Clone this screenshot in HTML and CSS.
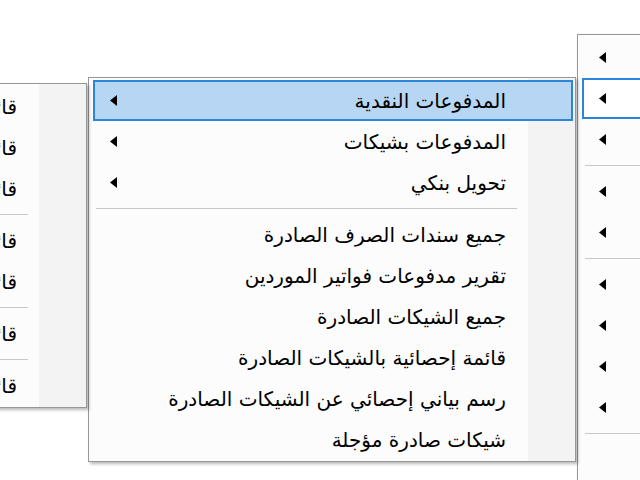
FILE: index.html
```html
<!DOCTYPE html>
<html lang="ar">
<head>
<meta charset="utf-8">
<title>قائمة المدفوعات</title>
<link rel="stylesheet" href="styles.css">
</head>
<body>
  <div class="menu menu-right">
    <div class="item"><span class="label">المقبوضات</span><svg class="arrow" viewBox="0 0 7 11"><path d="M7 0L0 5.5L7 11Z"/></svg></div>
    <div class="item focus"><span class="label">المدفوعات</span><svg class="arrow" viewBox="0 0 7 11"><path d="M7 0L0 5.5L7 11Z"/></svg></div>
    <div class="item"><span class="label">القيود اليومية</span><svg class="arrow" viewBox="0 0 7 11"><path d="M7 0L0 5.5L7 11Z"/></svg></div>
    <div class="sep"></div>
    <div class="item"><span class="label">العملاء</span><svg class="arrow" viewBox="0 0 7 11"><path d="M7 0L0 5.5L7 11Z"/></svg></div>
    <div class="item"><span class="label">الموردين</span><svg class="arrow" viewBox="0 0 7 11"><path d="M7 0L0 5.5L7 11Z"/></svg></div>
    <div class="sep"></div>
    <div class="item"><span class="label">الحسابات</span><svg class="arrow" viewBox="0 0 7 11"><path d="M7 0L0 5.5L7 11Z"/></svg></div>
    <div class="item"><span class="label">مراكز التكلفة</span><svg class="arrow" viewBox="0 0 7 11"><path d="M7 0L0 5.5L7 11Z"/></svg></div>
    <div class="item"><span class="label">الصناديق</span><svg class="arrow" viewBox="0 0 7 11"><path d="M7 0L0 5.5L7 11Z"/></svg></div>
    <div class="item"><span class="label">البنوك</span><svg class="arrow" viewBox="0 0 7 11"><path d="M7 0L0 5.5L7 11Z"/></svg></div>
    <div class="sep"></div>
    <div class="item"><span class="label">ميزان المراجعة</span></div>
    <div class="item"><span class="label">قائمة الدخل</span></div>
  </div>

  <div class="menu menu-mid">
    <div class="item hl"><span class="label">المدفوعات النقدية</span><svg class="arrow" viewBox="0 0 7 11"><path d="M7 0L0 5.5L7 11Z"/></svg></div>
    <div class="item"><span class="label">المدفوعات بشيكات</span><svg class="arrow" viewBox="0 0 7 11"><path d="M7 0L0 5.5L7 11Z"/></svg></div>
    <div class="item"><span class="label">تحويل بنكي</span><svg class="arrow" viewBox="0 0 7 11"><path d="M7 0L0 5.5L7 11Z"/></svg></div>
    <div class="sep"></div>
    <div class="item"><span class="label">جميع سندات الصرف الصادرة</span></div>
    <div class="item"><span class="label">تقرير مدفوعات فواتير الموردين</span></div>
    <div class="item"><span class="label">جميع الشيكات الصادرة</span></div>
    <div class="item"><span class="label">قائمة إحصائية بالشيكات الصادرة</span></div>
    <div class="item"><span class="label">رسم بياني إحصائي عن الشيكات الصادرة</span></div>
    <div class="item"><span class="label">شيكات صادرة مؤجلة</span></div>
  </div>

  <div class="menu menu-left">
    <div class="item"><span class="label">قائمة سندات الصرف النقدية</span></div>
    <div class="item"><span class="label">قائمة المدفوعات النقدية</span></div>
    <div class="item"><span class="label">قائمة المدفوعات حسب الصندوق</span></div>
    <div class="sep"></div>
    <div class="item"><span class="label">قائمة المدفوعات حسب الحساب</span></div>
    <div class="item"><span class="label">قائمة المدفوعات حسب المورد</span></div>
    <div class="sep"></div>
    <div class="item"><span class="label">قائمة المدفوعات اليومية</span></div>
    <div class="sep"></div>
    <div class="item"><span class="label">قائمة المدفوعات الملغاة</span></div>
  </div>
</body>
</html>
```

FILE: styles.css
```css
html, body {
  margin: 0;
  padding: 0;
  width: 640px;
  height: 480px;
  overflow: hidden;
  background: #ffffff;
}

.menu {
  position: absolute;
  box-sizing: border-box;
  border: 1px solid #979797;
  padding: 2px 2px 1px 4px;
  direction: rtl;
  font-family: "DejaVu Sans", sans-serif;
  font-size: 20px;
  color: #000;
  background: linear-gradient(to left, #f3f3f3 0, #f3f3f3 47px, #fcfcfc 47px);
  box-shadow: 2px 2px 3px rgba(0, 0, 0, 0.28);
}

.menu-right {
  left: 577px;
  top: 34px;
  width: 360px;
  z-index: 1;
}

.menu-mid {
  left: 88px;
  top: 77px;
  width: 488px;
  z-index: 2;
}

.menu-left {
  left: -300px;
  top: 83px;
  width: 387px;
  z-index: 3;
}

.item {
  display: flex;
  align-items: center;
  height: 41px;
  box-sizing: border-box;
  padding-right: 67px;
  white-space: nowrap;
}

.item.hl {
  background: #b7d6f3;
  box-shadow: inset 0 0 0 2px #2b85db;
}

.item.focus {
  background: #ffffff;
  box-shadow: inset 0 0 0 2px #2b85db;
}

.label {
  line-height: 1;
}

.arrow {
  width: 7px;
  height: 11px;
  margin-right: auto;
  margin-left: 17px;
  fill: #000;
  flex: none;
}

.sep {
  height: 11px;
  display: flex;
  align-items: center;
}

.sep::after {
  content: "";
  flex: 1;
  height: 1px;
  background: #c8c8c8;
  margin-left: 3px;
  margin-right: 56px;
}
```
